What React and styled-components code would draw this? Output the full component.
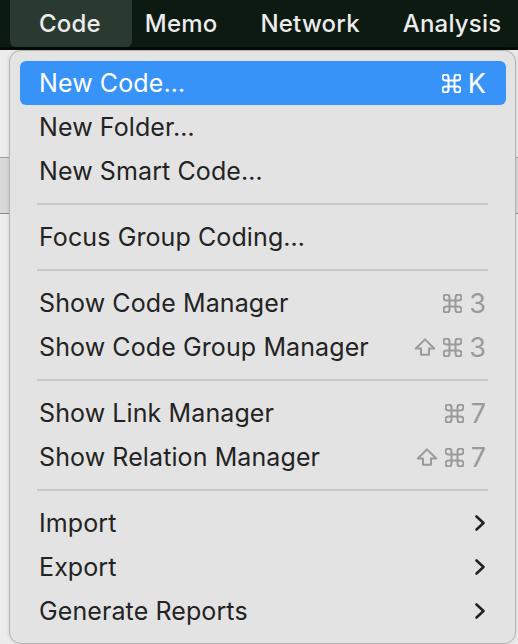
import React from "react";
import styled, { createGlobalStyle } from "styled-components";

const GlobalStyle = createGlobalStyle`
  html, body { margin: 0; padding: 0; }
  body {
    background: #ececec;
    font-family: Inter, "Noto Sans", "DejaVu Sans", sans-serif;
    -webkit-font-smoothing: antialiased;
  }
`;

const Screen = styled.div`
  width: 518px;
  height: 644px;
  overflow: hidden;
  display: flex;
  flex-direction: column;
  background: #ececec;
`;

const MenuBar = styled.div`
  height: 47px;
  flex: 0 0 auto;
  display: flex;
  align-items: stretch;
  padding-left: 10px;
  background: #0d1a11;
  border-bottom: 3px solid #060b07;
`;

const Title = styled.div`
  display: flex;
  align-items: center;
  padding: ${(p) => (p.$active ? "0 31px 0 29px" : "0 21.5px")};
  margin-right: ${(p) => (p.$active ? "-8.5px" : "0")};
  border-radius: ${(p) => (p.$active ? "0 0 6px 6px" : "0")};
  background: ${(p) => (p.$active ? "#2b3a30" : "transparent")};
  color: #ececec;
  font-size: 24px;
  font-weight: 500;
  letter-spacing: 0.2px;
  white-space: nowrap;
`;

const Body = styled.div`
  position: relative;
  flex: 1 1 auto;
`;

const BackWindow = styled.div`
  display: flex;
  flex-direction: column;
  padding-top: 107px;
`;

const BackBand = styled.div`
  height: 55px;
  background: #d8d8d8;
  border-top: 1px solid #9c9c9c;
  border-bottom: 1px solid #8c8c8c;
`;

const Dropdown = styled.div`
  position: absolute;
  left: 9px;
  top: 0;
  width: 507px;
  box-sizing: border-box;
  padding: 10px 9px 10px 10px;
  background: #e3e3e3;
  border: 1px solid #b4b4b4;
  border-radius: 12px;
  box-shadow: 0 0 4px rgba(0, 0, 0, 0.12);
  display: flex;
  flex-direction: column;
`;

const Row = styled.div`
  height: 44px;
  display: flex;
  align-items: center;
  justify-content: space-between;
  padding: 0 20px 0 19px;
  border-radius: 6px;
  background: ${(p) => (p.$active ? "#3893f8" : "transparent")};
  color: ${(p) => (p.$active ? "#ffffff" : "#232323")};
`;

const Label = styled.span`
  font-size: 25px;
  font-weight: 400;
  letter-spacing: 0.1px;
  white-space: nowrap;
`;

const Shortcut = styled.span`
  display: flex;
  align-items: center;
  gap: 7px;
  color: ${(p) => (p.$active ? "#ffffff" : "#9a9a9a")};
  font-size: 27px;
  font-weight: 400;
`;

const Key = styled.span`
  display: inline-block;
  min-width: 15px;
  text-align: center;
`;

const Separator = styled.div`
  height: 22px;
  display: flex;
  align-items: center;
  padding: 0 18px 0 17px;
  &::after {
    content: "";
    flex: 1;
    height: 2px;
    background: #c8c8c8;
  }
`;

const CommandIcon = () => (
  <svg width="19" height="19" viewBox="2.5 2.5 19 19" fill="none" stroke="currentColor" strokeWidth="2" strokeLinecap="round" strokeLinejoin="round">
    <path d="M15 6v12a3 3 0 1 0 3-3H6a3 3 0 1 0 3 3V6a3 3 0 1 0-3 3h12a3 3 0 1 0-3-3" />
  </svg>
);

const ShiftIcon = () => (
  <svg width="22" height="18" viewBox="0 0 22 18" fill="none" stroke="currentColor" strokeWidth="2" strokeLinejoin="round">
    <path d="M7 16.8v-6.3H1.8L11 1.4l9.2 9.1H15v6.3z" />
  </svg>
);

const Chevron = () => (
  <svg width="12" height="18" viewBox="0 0 12 18" fill="none" stroke="#232323" strokeWidth="2.6" strokeLinecap="round" strokeLinejoin="round">
    <path d="M2.5 2.5 9.5 9l-7 6.5" />
  </svg>
);

const items = [
  { label: "New Code…", keys: ["cmd", "K"], active: true },
  { label: "New Folder…" },
  { label: "New Smart Code…" },
  { sep: true },
  { label: "Focus Group Coding…" },
  { sep: true },
  { label: "Show Code Manager", keys: ["cmd", "3"] },
  { label: "Show Code Group Manager", keys: ["shift", "cmd", "3"] },
  { sep: true },
  { label: "Show Link Manager", keys: ["cmd", "7"] },
  { label: "Show Relation Manager", keys: ["shift", "cmd", "7"] },
  { sep: true },
  { label: "Import", sub: true },
  { label: "Export", sub: true },
  { label: "Generate Reports", sub: true },
];

const renderKey = (k, i) => {
  if (k === "cmd") return <CommandIcon key={i} />;
  if (k === "shift") return <ShiftIcon key={i} />;
  return <Key key={i}>{k}</Key>;
};

export default function App() {
  return (
    <>
      <GlobalStyle />
      <Screen>
        <MenuBar>
          <Title $active>Code</Title>
          <Title>Memo</Title>
          <Title>Network</Title>
          <Title>Analysis</Title>
        </MenuBar>
        <Body>
          <BackWindow>
            <BackBand />
          </BackWindow>
          <Dropdown>
            {items.map((it, i) =>
              it.sep ? (
                <Separator key={i} />
              ) : (
                <Row key={i} $active={it.active}>
                  <Label>{it.label}</Label>
                  {it.keys && <Shortcut $active={it.active}>{it.keys.map(renderKey)}</Shortcut>}
                  {it.sub && <Chevron />}
                </Row>
              )
            )}
          </Dropdown>
        </Body>
      </Screen>
    </>
  );
}
